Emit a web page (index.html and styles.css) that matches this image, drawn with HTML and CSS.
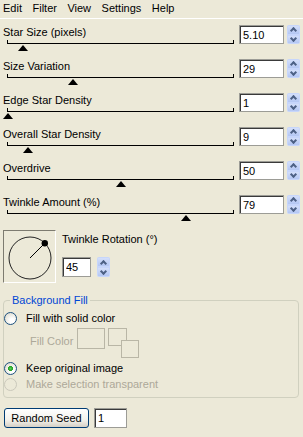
FILE: index.html
```html
<!DOCTYPE html>
<html lang="en">
<head>
    <meta charset="UTF-8" />
    <title>Star Filter</title>
    <link rel="stylesheet" href="styles.css">
</head>
<body>
    <div class="menubar">
        <span>Edit</span><span>Filter</span><span>View</span><span>Settings</span><span>Help</span>
    </div>

    <div class="params">
        <div class="param">
            <div class="slider-col">
                <div class="label">Star Size (pixels)</div>
                <div class="track"><span class="thumb" style="left:6.7%"></span></div>
            </div>
            <input class="num" type="text" value="5.10" />
            <div class="spin"><span class="up"></span><span class="down"></span></div>
        </div>
        <div class="param">
            <div class="slider-col">
                <div class="label">Size Variation</div>
                <div class="track"><span class="thumb" style="left:29%"></span></div>
            </div>
            <input class="num" type="text" value="29" />
            <div class="spin"><span class="up"></span><span class="down"></span></div>
        </div>
        <div class="param">
            <div class="slider-col">
                <div class="label">Edge Star Density</div>
                <div class="track"><span class="thumb" style="left:0%"></span></div>
            </div>
            <input class="num" type="text" value="1" />
            <div class="spin"><span class="up"></span><span class="down"></span></div>
        </div>
        <div class="param">
            <div class="slider-col">
                <div class="label">Overall Star Density</div>
                <div class="track"><span class="thumb" style="left:9%"></span></div>
            </div>
            <input class="num" type="text" value="9" />
            <div class="spin"><span class="up"></span><span class="down"></span></div>
        </div>
        <div class="param">
            <div class="slider-col">
                <div class="label">Overdrive</div>
                <div class="track"><span class="thumb" style="left:50%"></span></div>
            </div>
            <input class="num" type="text" value="50" />
            <div class="spin"><span class="up"></span><span class="down"></span></div>
        </div>
        <div class="param">
            <div class="slider-col">
                <div class="label">Twinkle Amount (%)</div>
                <div class="track"><span class="thumb" style="left:79%"></span></div>
            </div>
            <input class="num" type="text" value="79" />
            <div class="spin"><span class="up"></span><span class="down"></span></div>
        </div>
    </div>

    <div class="rotation">
        <div class="dial">
            <svg width="51" height="51" viewBox="0 0 51 51">
                <circle cx="26" cy="27" r="21" fill="none" stroke="#222" stroke-width="1" />
                <line x1="26" y1="27" x2="40.8" y2="12.2" stroke="#000" stroke-width="1" />
                <circle cx="40.8" cy="12.2" r="3.2" fill="#000" />
            </svg>
        </div>
        <div class="rot-side">
            <div class="label">Twinkle Rotation (°)</div>
            <div class="rot-input">
                <input class="num small" type="text" value="45" />
                <div class="spin tall"><span class="up"></span><span class="down"></span></div>
            </div>
        </div>
    </div>

    <fieldset class="group">
        <legend>Background Fill</legend>
        <div class="radio"><span class="circle"></span>Fill with solid color</div>
        <div class="fill-row">
            <span class="fill-label">Fill Color</span>
            <span class="swatch"></span>
            <svg class="swap" width="31" height="30" viewBox="0 0 31 30">
                <rect x="0.5" y="0.5" width="18" height="17" fill="#ECE9D8" stroke="#B9B6A6" />
                <rect x="13.5" y="12.5" width="17" height="17" fill="#ECE9D8" stroke="#B9B6A6" />
            </svg>
        </div>
        <div class="radio second"><span class="circle checked"></span>Keep original image</div>
        <div class="radio disabled"><span class="circle"></span>Make selection transparent</div>
    </fieldset>

    <div class="seed-row">
        <button class="seed">Random Seed</button>
        <input class="num seed-num" type="text" value="1" />
    </div>
</body>
</html>
```

FILE: styles.css
```css
body {
    margin: 0;
    background-color: #ECE9D8;
    font-family: "Liberation Sans", Arial, sans-serif;
    font-size: 11px;
    color: #000;
}
.menubar {
    display: flex;
    gap: 10.5px;
    height: 18px;
    line-height: 16px;
    padding-left: 3px;
    border-bottom: 1px solid #fff;
}
.params {
    padding: 6px 0 0 3px;
}
.param {
    display: flex;
    height: 34px;
}
.slider-col {
    width: 236px;
}
.label {
    height: 14px;
    line-height: 14px;
    white-space: nowrap;
}
.track {
    position: relative;
    box-sizing: border-box;
    width: 227px;
    height: 4px;
    margin: 1px 0 0 4px;
    border-left: 1px solid #000;
    border-right: 1px solid #000;
    border-bottom: 1px solid #000;
}
.thumb {
    position: absolute;
    top: 5px;
    width: 0;
    height: 0;
    margin-left: -5px;
    border-left: 5px solid transparent;
    border-right: 5px solid transparent;
    border-bottom: 6px solid #000;
}
.num {
    box-sizing: border-box;
    width: 45px;
    height: 19px;
    margin: 0;
    padding: 0 0 0 3px;
    border: 1px solid #9C9C96;
    box-shadow: inset 1px 1px 0 #3a3a3a;
    background: #fff;
    font-family: "Liberation Sans", Arial, sans-serif;
    font-size: 11px;
    color: #000;
    outline: none;
}
.spin {
    display: flex;
    flex-direction: column;
    box-sizing: border-box;
    width: 13px;
    height: 19px;
    margin-left: 3px;
    border-radius: 2px;
    overflow: hidden;
}
.spin span {
    flex: 1;
    display: flex;
    align-items: center;
    justify-content: center;
    background: linear-gradient(#D4DFFA, #B4C7F3);
    border: 1px solid #C7D6FB;
}
.spin span::before {
    content: "";
    width: 3px;
    height: 3px;
    border-left: 2px solid #4D6185;
    border-top: 2px solid #4D6185;
}
.spin .up::before {
    transform: translateY(1px) rotate(45deg);
}
.spin .down::before {
    transform: translateY(-1px) rotate(-135deg);
}
.rotation {
    display: flex;
    margin-top: 1px;
    padding-left: 3px;
}
.dial {
    box-sizing: border-box;
    width: 53px;
    height: 53px;
    border-top: 1px solid #7D7B70;
    border-left: 1px solid #7D7B70;
    border-right: 1px solid #fff;
    border-bottom: 1px solid #fff;
}
.dial svg {
    display: block;
}
.rot-side {
    margin-left: 6px;
    padding-top: 2px;
}
.rot-input {
    display: flex;
    margin-top: 11px;
}
.num.small {
    width: 29px;
    height: 20px;
}
.spin.tall {
    height: 20px;
    margin-left: 6px;
}
.group {
    margin: 10px 4px 0 3px;
    padding: 0 0 5px 0;
    border: 1px solid #D0D0BF;
    border-radius: 4px;
}
.group legend {
    margin-left: 6px;
    padding: 0 2px;
    line-height: 14px;
    color: #0046D5;
}
.radio {
    display: flex;
    align-items: center;
    height: 16px;
    margin-top: 3px;
    white-space: nowrap;
}
.radio.second {
    margin-top: 2px;
}
.radio.disabled {
    margin-top: 0;
    color: #ACA899;
}
.circle {
    box-sizing: border-box;
    width: 13px;
    height: 13px;
    margin-right: 9px;
    border: 1px solid #1C5180;
    border-radius: 50%;
    background: radial-gradient(circle at 65% 70%, #fff 20%, #E6E4DA 70%, #D0CEC2 100%);
}
.circle.checked {
    background:
        radial-gradient(circle, #5BD25B 0, #21A121 2.2px, transparent 2.8px),
        radial-gradient(circle at 65% 70%, #fff 20%, #E6E4DA 70%, #D0CEC2 100%);
}
.disabled .circle {
    border-color: #CAC8BB;
    background: #ECE9D8;
}
.fill-row {
    display: flex;
    margin-top: 2px;
    padding-left: 26px;
}
.fill-label {
    margin-top: 6px;
    line-height: 14px;
    color: #ACA899;
}
.swatch {
    box-sizing: border-box;
    width: 28px;
    height: 21px;
    margin-left: 4px;
    border: 1px solid #B9B6A6;
}
.swap {
    display: block;
    margin-left: 3px;
}
.seed-row {
    display: flex;
    margin-top: 10px;
    padding-left: 4px;
}
.seed {
    box-sizing: border-box;
    width: 85px;
    height: 20px;
    padding: 0;
    border: 1px solid #003C74;
    border-radius: 3px;
    background: linear-gradient(#FFFFFF, #F3F2EC 60%, #D6D0C5);
    font-family: "Liberation Sans", Arial, sans-serif;
    font-size: 11px;
    color: #000;
}
.num.seed-num {
    width: 33px;
    height: 20px;
    margin-left: 5px;
}
```
